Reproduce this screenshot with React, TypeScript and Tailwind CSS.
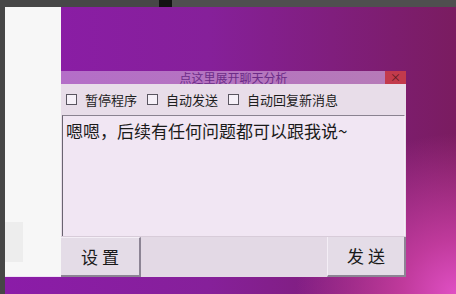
import React from 'react';

const cjk = "font-['Microsoft_YaHei','Noto_Sans_CJK_SC',sans-serif]";

function Check({ label }: { label: string }) {
    return (
        <label className="flex items-center gap-[8px]">
            <span className="w-[11px] h-[11px] border border-[#5a5560] bg-[#f6f0f8]" />
            <span className="text-[13px] leading-none text-[#1e1e1e]">{label}</span>
        </label>
    );
}

export default function App() {
    return (
        <div className={`w-[456px] h-[294px] overflow-hidden bg-[#464646] flex flex-col ${cjk}`}>
            {/* top strip */}
            <div className="h-[7px] flex shrink-0">
                <div className="w-[159px] bg-[#474747]" />
                <div className="w-[13px] bg-[#121212]" />
                <div className="flex-1 bg-[#4f4f4f]" />
            </div>

            <div className="flex flex-1">
                <div className="w-[5px] bg-[#464646]" />
                <div className="flex-1 flex flex-col bg-[radial-gradient(circle_at_100%_100%,#e050c4_0%,#c03a9c_10%,transparent_30%),linear-gradient(90deg,#8b1ca8_0%,#86209a_45%,#7a1c60_100%)]">
                    <div className="flex h-[270px]">
                        {/* white side panel */}
                        <div className="w-[56px] bg-[#f7f7f7] flex flex-col justify-end pb-[14px] border-b border-[#efe2f5]">
                            <div className="w-[18px] h-[40px] bg-[#ededed]" />
                        </div>

                        <div className="flex flex-col">
                            <div className="h-[64px]" />
                            {/* dialog */}
                            <div className="w-[345px] flex-1 flex flex-col bg-[#e8dde9]">
                                <div className="h-[13px] flex">
                                    <div className="flex-1 pl-[21px] bg-[linear-gradient(90deg,#b46ec8,#b67ab8)] text-[12px] leading-[13px] text-center text-[#6c2c88]">
                                        点这里展开聊天分析
                                    </div>
                                    <div className="w-[21px] bg-[#c23a4c] text-[#5a1a20] text-[11px] leading-[13px] text-center">×</div>
                                </div>

                                <div className="h-[31px] flex items-center gap-[10px] pl-[5px]">
                                    <Check label="暂停程序" />
                                    <Check label="自动发送" />
                                    <Check label="自动回复新消息" />
                                </div>

                                <div className="flex-1 ml-[1px] mr-[1px] border-l border-t border-l-[#6a6470] border-t-[#8a8290] border-r border-r-[#f6eef8] bg-[#f1e6f3] px-[3px] pt-[5px] text-[17px] leading-[20px] text-[#1a1a1a]">
                                    嗯嗯，后续有任何问题都可以跟我说~
                                </div>

                                <div className="h-[41px] flex border-t border-[#d8ccd9]">
                                    <div className="w-[80px] flex items-center justify-center bg-[#e4dce7] border-r-2 border-b-2 border-[#8c8494] border-t border-t-[#f4eef6] text-[17px] text-[#1a1a1a]">
                                        设 置
                                    </div>
                                    <div className="flex-1 bg-[#e3d9e5]" />
                                    <div className="w-[79px] flex items-center justify-center bg-[#e4dce7] border-l border-l-[#f4eef6] border-r-2 border-b-2 border-[#8c8494] text-[17px] text-[#1a1a1a]">
                                        发 送
                                    </div>
                                </div>
                            </div>
                        </div>
                    </div>
                </div>
            </div>
        </div>
    );
}
